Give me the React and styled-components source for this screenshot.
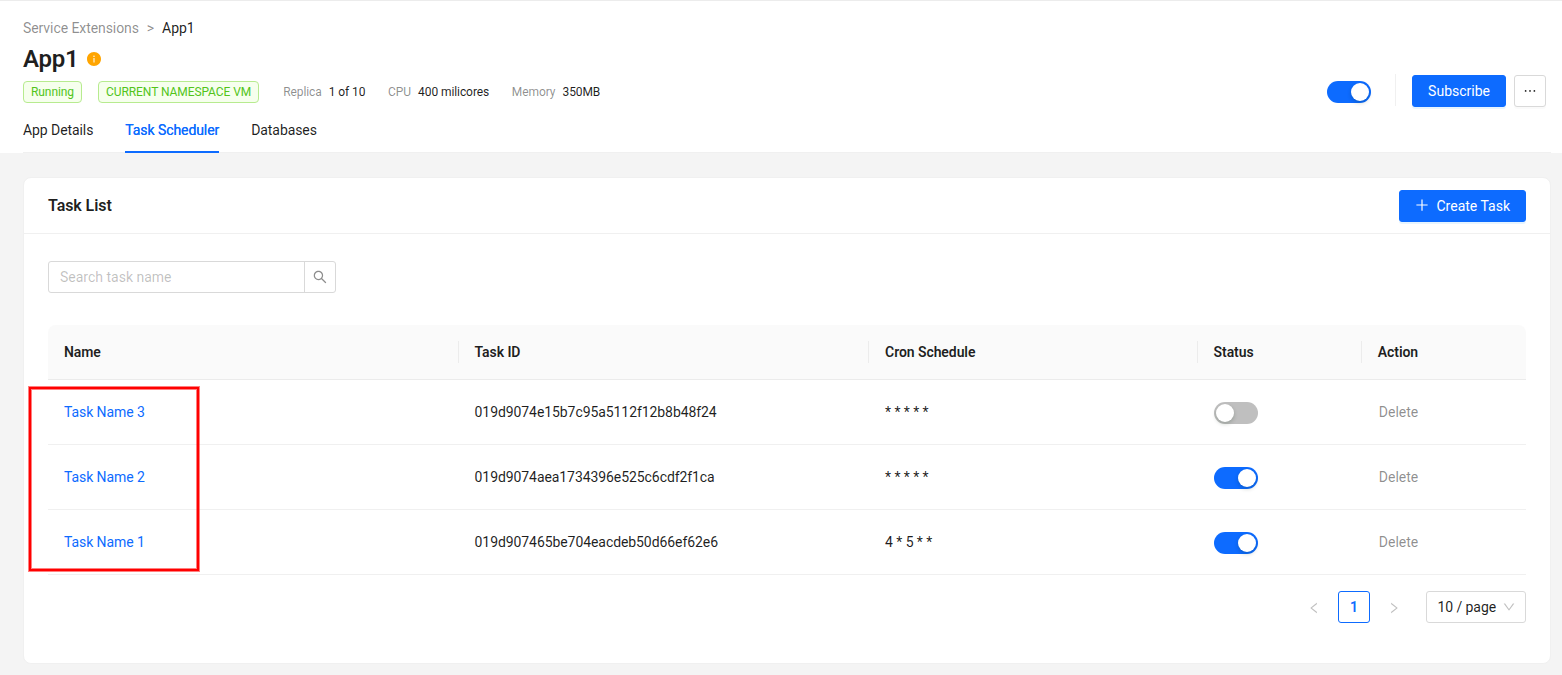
import React from 'react';
import styled, {createGlobalStyle} from 'styled-components';
import {
  AiFillInfoCircle,
  AiOutlineDown,
  AiOutlineEllipsis,
  AiOutlineLeft,
  AiOutlinePlus,
  AiOutlineRight,
  AiOutlineSearch,
} from 'react-icons/ai';

const PRIMARY_COLOR = '#0d6bff';
const TEXT_COLOR = 'rgba(0, 0, 0, 0.88)';
const MUTED_COLOR = 'rgba(0, 0, 0, 0.45)';

const GlobalStyle = createGlobalStyle`
  * {
    box-sizing: border-box;
  }
  body {
    margin: 0;
    background: #f4f4f4;
    color: ${TEXT_COLOR};
    font-family: Roboto, 'Liberation Sans', sans-serif;
    font-size: 14px;
    letter-spacing: -0.0055em;
    line-height: 22px;
  }
  button, input {
    font: inherit;
  }
`;

const Header = styled.header`
  height: 153px;
  padding: 16px 11px 0 23px;
  border-top: 1px solid #ececec;
  background: #fff;
`;

const Breadcrumb = styled.nav`
  display: flex;
  gap: 8px;
  color: ${MUTED_COLOR};
`;

const Current = styled.span`
  color: ${TEXT_COLOR};
`;

const HeaderMain = styled.div`
  display: flex;
  justify-content: space-between;
  height: 64px;
  padding-right: 5px;
`;

const TitleRow = styled.div`
  display: flex;
  align-items: center;
  gap: 8px;
  height: 32px;
  margin-top: 4px;

  svg {
    color: #ffa500;
    font-size: 16px;
  }
`;

const Title = styled.h1`
  margin: 0;
  font-size: 24px;
  font-weight: 600;
  letter-spacing: -0.01em;
  line-height: 32px;
`;

const MetaRow = styled.div`
  display: flex;
  align-items: center;
  margin-top: 6px;
  font-size: 12px;
`;

const Tag = styled.span`
  margin-right: 16px;
  padding: 0 7px;
  border: 1px solid #b7eb8f;
  border-radius: 4px;
  background: #f6ffed;
  color: #52c41a;
  line-height: 20px;
`;

const Meta = styled.span`
  margin: 0 14.7px 0 8px;
  color: ${MUTED_COLOR};

  b {
    margin-left: 7px;
    color: ${TEXT_COLOR};
    font-weight: 400;
  }
`;

const Actions = styled.div`
  display: flex;
  align-items: center;
  height: 34px;
  margin-top: 35px;

  [role='switch'] {
    margin-top: 2px;
  }
`;

const Divider = styled.span`
  width: 1px;
  height: 32px;
  margin: 0 16px 2px 24px;
  background: #f0f0f0;
`;

const Button = styled.button`
  display: flex;
  align-items: center;
  justify-content: center;
  gap: 7px;
  height: 32px;
  padding: 0 15px;
  border: 1px solid ${PRIMARY_COLOR};
  border-radius: 3px;
  background: ${PRIMARY_COLOR};
  box-shadow: 0 2px 0 rgba(5, 145, 255, 0.1);
  color: #fff;

  svg {
    margin: -2px 0 0 -1px;
    font-size: 16px;
  }
`;

const MoreButton = styled(Button)`
  width: 32px;
  margin-left: 8px;
  padding: 0;
  border-color: #d9d9d9;
  background: #fff;
  box-shadow: 0 2px 0 rgba(0, 0, 0, 0.02);
  color: ${TEXT_COLOR};

  svg {
    margin: 0;
  }
`;

const SwitchTrack = styled.button`
  display: flex;
  justify-content: ${({$on}) => ($on ? 'flex-end' : 'flex-start')};
  width: 44px;
  height: 22px;
  padding: 2px;
  border: 0;
  border-radius: 11px;
  background: ${({$on}) => ($on ? PRIMARY_COLOR : '#bfbfbf')};
`;

const SwitchHandle = styled.span`
  width: 18px;
  height: 18px;
  border-radius: 50%;
  background: #fff;
  box-shadow: 0 2px 4px rgba(0, 35, 11, 0.2);
`;

const Tabs = styled.div`
  display: flex;
  gap: 32px;
  height: 50px;
  border-bottom: 1px solid #f0f0f0;
`;

const Tab = styled.div`
  height: 50px;
  padding-top: 16px;
  border-bottom: 2px solid ${({$active}) => ($active ? PRIMARY_COLOR : 'transparent')};
  color: ${({$active}) => ($active ? PRIMARY_COLOR : TEXT_COLOR)};
  text-shadow: ${({$active}) => ($active ? '0 0 0.25px currentcolor' : 'none')};
`;

const Card = styled.main`
  height: 487px;
  margin: 24px 11px 0 23px;
  border: 1px solid #f0f0f0;
  border-radius: 8px;
  background: #fff;
`;

const CardHeader = styled.div`
  display: flex;
  align-items: center;
  justify-content: space-between;
  height: 56px;
  padding: 0 24px;
  border-bottom: 1px solid #f0f0f0;
`;

const CardTitle = styled.h2`
  margin: 0;
  font-size: 16px;
  font-weight: 600;
  line-height: 24px;
`;

const CardBody = styled.div`
  padding: 27px 24px 0;
`;

const Search = styled.div`
  display: flex;
  width: 288px;
  height: 32px;
  margin-bottom: 32px;
  border: 1px solid #d9d9d9;
  border-radius: 3px;
`;

const SearchInput = styled.input`
  flex: 1;
  min-width: 0;
  padding: 0 11px;
  border: 0;
  background: none;
  outline: none;

  &::placeholder {
    color: rgba(0, 0, 0, 0.25);
  }
`;

const SearchButton = styled.button`
  display: flex;
  align-items: center;
  justify-content: center;
  width: 31px;
  padding: 0;
  border: 0;
  border-left: 1px solid #d9d9d9;
  background: none;
  color: ${MUTED_COLOR};
  font-size: 16px;
`;

const Row = styled.div`
  display: grid;
  grid-template-columns: 5fr 5fr 4fr 2fr 2fr;
  align-items: center;
  height: 65px;
  border-bottom: 1px solid #f0f0f0;
`;

const HeadRow = styled(Row)`
  height: 55px;
  border-bottom-color: #ebebeb;
  border-radius: 8px 8px 0 0;
  background: #fafafa;
  font-weight: 600;
`;

const Cell = styled.div`
  padding: 0 16px;
`;

const HeadCell = styled(Cell)`
  border-right: 1px solid #ececec;

  &:last-child {
    border-right: 0;
  }
`;

const TaskLink = styled.a`
  color: ${PRIMARY_COLOR};
`;

const StatusCell = styled(Cell)`
  padding-top: 2px;
`;

const DeleteCell = styled(Cell)`
  padding-left: 17px;
  color: ${MUTED_COLOR};
  letter-spacing: normal;
`;

const TableWrapper = styled.div`
  position: relative;
`;

const Highlight = styled.div`
  position: absolute;
  top: 62px;
  left: -19px;
  width: 170px;
  height: 184px;
  border: 2px solid #ff0000;
  box-shadow: 0 0 0 1px rgba(255, 0, 0, 0.5), inset 0 0 0 1px rgba(255, 0, 0, 0.5);
  pointer-events: none;
`;

const Pagination = styled.div`
  display: flex;
  justify-content: flex-end;
  gap: 8px;
  margin-top: 16px;
`;

const PageItem = styled.div`
  display: flex;
  align-items: center;
  justify-content: center;
  width: 32px;
  height: 32px;
  border: 1px solid ${({$active}) => ($active ? PRIMARY_COLOR : 'transparent')};
  border-radius: 3px;
  color: ${({$active}) => ($active ? PRIMARY_COLOR : 'rgba(0, 0, 0, 0.25)')};
  font-weight: 600;

  svg {
    margin-top: 2px;
    font-size: 14px;
  }
`;

const PageSize = styled.div`
  display: flex;
  align-items: center;
  justify-content: space-between;
  width: 100px;
  height: 32px;
  margin-left: 8px;
  padding: 0 9px 0 10.5px;
  border: 1px solid #d9d9d9;
  border-radius: 3px;

  svg {
    color: rgba(0, 0, 0, 0.25);
    font-size: 14px;
  }
`;

const tasks = [
  {name: 'Task Name 3', id: '019d9074e15b7c95a5112f12b8b48f24', cron: '* * * * *', enabled: false},
  {name: 'Task Name 2', id: '019d9074aea1734396e525c6cdf2f1ca', cron: '* * * * *', enabled: true},
  {name: 'Task Name 1', id: '019d907465be704eacdeb50d66ef62e6', cron: '4 * 5 * *', enabled: true},
];

const columns = ['Name', 'Task ID', 'Cron Schedule', 'Status', 'Action'];

const Switch = ({on}) => (
  <SwitchTrack $on={on} role="switch" aria-checked={on}>
    <SwitchHandle/>
  </SwitchTrack>
);

const AppHeader = () => (
  <Header>
    <Breadcrumb>
      <span>Service Extensions</span>
      <span>&gt;</span>
      <Current>App1</Current>
    </Breadcrumb>
    <HeaderMain>
      <div>
        <TitleRow>
          <Title>App1</Title>
          <AiFillInfoCircle/>
        </TitleRow>
        <MetaRow>
          <Tag>Running</Tag>
          <Tag>CURRENT NAMESPACE VM</Tag>
          <Meta>Replica<b>1 of 10</b></Meta>
          <Meta>CPU<b>400 milicores</b></Meta>
          <Meta>Memory<b>350MB</b></Meta>
        </MetaRow>
      </div>
      <Actions>
        <Switch on/>
        <Divider/>
        <Button>Subscribe</Button>
        <MoreButton aria-label="More"><AiOutlineEllipsis/></MoreButton>
      </Actions>
    </HeaderMain>
    <Tabs>
      <Tab>App Details</Tab>
      <Tab $active>Task Scheduler</Tab>
      <Tab>Databases</Tab>
    </Tabs>
  </Header>
);

const TaskTable = () => (
  <TableWrapper>
    <HeadRow>
      {columns.map((column) => <HeadCell key={column}>{column}</HeadCell>)}
    </HeadRow>
    {tasks.map(({name, id, cron, enabled}) => (
      <Row key={id}>
        <Cell><TaskLink>{name}</TaskLink></Cell>
        <Cell>{id}</Cell>
        <Cell>{cron}</Cell>
        <StatusCell><Switch on={enabled}/></StatusCell>
        <DeleteCell>Delete</DeleteCell>
      </Row>
    ))}
    <Highlight/>
  </TableWrapper>
);

const App = () => (
  <>
    <GlobalStyle/>
    <AppHeader/>
    <Card>
      <CardHeader>
        <CardTitle>Task List</CardTitle>
        <Button><AiOutlinePlus/>Create Task</Button>
      </CardHeader>
      <CardBody>
        <Search>
          <SearchInput placeholder="Search task name"/>
          <SearchButton aria-label="Search"><AiOutlineSearch/></SearchButton>
        </Search>
        <TaskTable/>
        <Pagination>
          <PageItem><AiOutlineLeft/></PageItem>
          <PageItem $active>1</PageItem>
          <PageItem><AiOutlineRight/></PageItem>
          <PageSize>10 / page<AiOutlineDown/></PageSize>
        </Pagination>
      </CardBody>
    </Card>
  </>
);

export default App;
